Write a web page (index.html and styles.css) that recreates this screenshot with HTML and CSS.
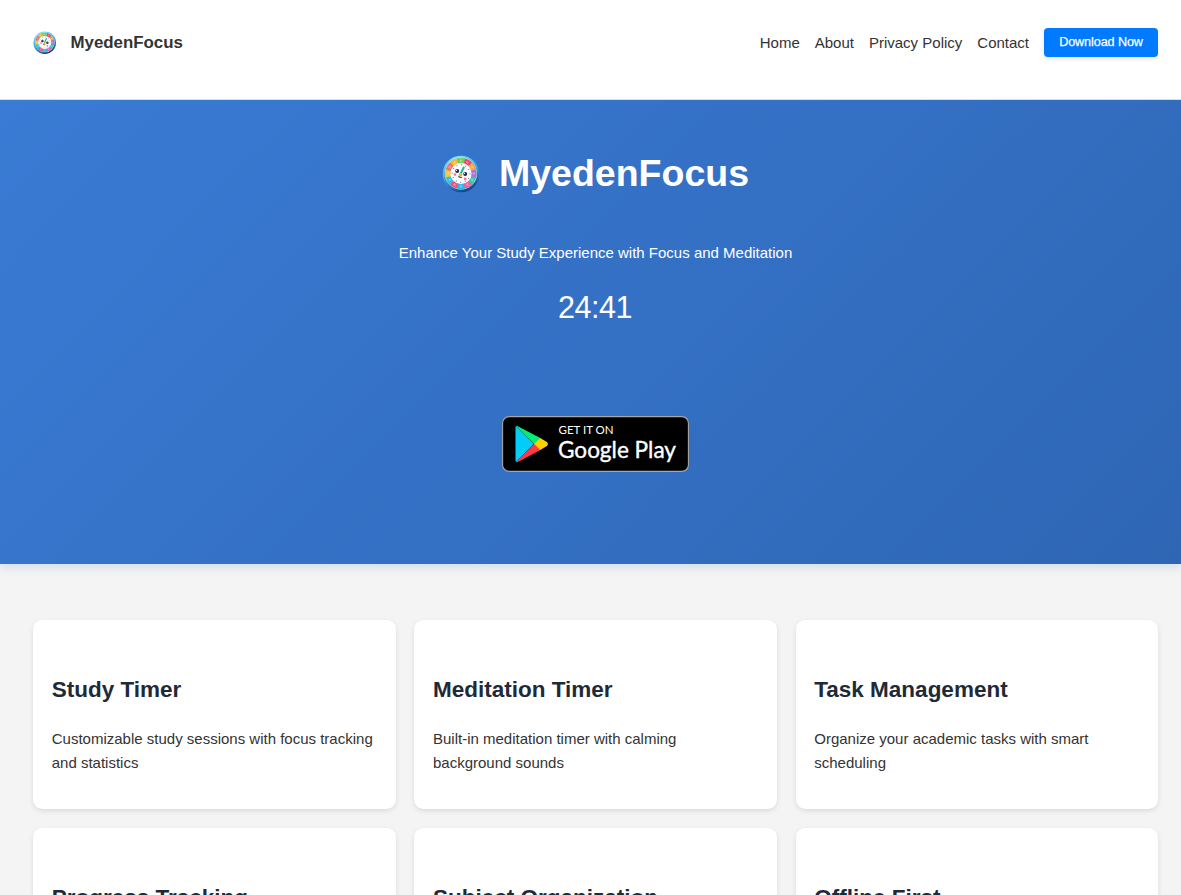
FILE: index.html
```html
<!DOCTYPE html>
<html lang="en">
<head>
<meta charset="utf-8">
<title>MyedenFocus</title>
<link rel="stylesheet" href="styles.css">
</head>
<body>
<svg width="0" height="0" class="defs" aria-hidden="true">
  <defs>
    <linearGradient id="rim" x1="0.2" y1="0" x2="0.6" y2="1"><stop offset="0" stop-color="#8fe6fa"/><stop offset=".5" stop-color="#3aa5df"/><stop offset="1" stop-color="#123f91"/></linearGradient>
    <symbol id="clock" viewBox="0 0 38 38">
      <circle cx="19" cy="19" r="18.3" fill="url(#rim)"/>
      <circle cx="19" cy="18.5" r="16" fill="#d9f5fb"/>
      <g fill="none" stroke-width="5.5">
        <circle cx="19" cy="18.5" r="12.8" stroke="#35c6ae"/>
        <circle cx="19" cy="18.5" r="12.8" stroke="#f04868" pathLength="12" stroke-dasharray="1 11" stroke-dashoffset="2.5"/>
        <circle cx="19" cy="18.5" r="12.8" stroke="#ffa43a" pathLength="12" stroke-dasharray="1 11" stroke-dashoffset="1.5"/>
        <circle cx="19" cy="18.5" r="12.8" stroke="#b36be0" pathLength="12" stroke-dasharray="1 11" stroke-dashoffset=".5"/>
        <circle cx="19" cy="18.5" r="12.8" stroke="#f65c9a" pathLength="12" stroke-dasharray="1 11" stroke-dashoffset="-1.5"/>
        <circle cx="19" cy="18.5" r="12.8" stroke="#2fb8ee" pathLength="12" stroke-dasharray="1 11" stroke-dashoffset="-2.5"/>
        <circle cx="19" cy="18.5" r="12.8" stroke="#f34e86" pathLength="12" stroke-dasharray="1 11" stroke-dashoffset="-3.5"/>
        <circle cx="19" cy="18.5" r="12.8" stroke="#35baf3" pathLength="12" stroke-dasharray="1 11" stroke-dashoffset="-4.5"/>
        <circle cx="19" cy="18.5" r="12.8" stroke="#ffc22e" pathLength="12" stroke-dasharray="1 11" stroke-dashoffset="-5.5"/>
        <circle cx="19" cy="18.5" r="12.8" stroke="#f86b74" pathLength="12" stroke-dasharray="1 11" stroke-dashoffset="-6.5"/>
        <circle cx="19" cy="18.5" r="12.8" stroke="#ffb52d" pathLength="12" stroke-dasharray="1 11" stroke-dashoffset="-7.5"/>
        <circle cx="19" cy="18.5" r="12.8" stroke="#78cf55" pathLength="12" stroke-dasharray="1 11" stroke-dashoffset="-8.5"/>
      </g>
      <circle cx="19" cy="18.5" r="12.8" fill="none" stroke="#fff" stroke-opacity=".3" stroke-width="2.2" pathLength="12" stroke-dasharray=".35 .65" stroke-dashoffset=".18"/>
      <circle cx="19" cy="18.5" r="10.6" fill="#fafdff"/>
      <circle cx="19" cy="18.5" r="8.9" fill="none" stroke="#5c6a86" stroke-width="1.2" pathLength="12" stroke-dasharray=".16 .84"/>
      <circle cx="15.2" cy="16" r="2" fill="#20294a"/><circle cx="23.2" cy="19" r="2" fill="#20294a"/>
      <circle cx="14.6" cy="15.4" r=".6" fill="#fff"/><circle cx="22.6" cy="18.4" r=".6" fill="#fff"/>
      <circle cx="13" cy="19.6" r="1.4" fill="#ff7590"/><circle cx="23.2" cy="24" r="1.4" fill="#ff7590"/>
      <path d="M15.8 20.4q1 3.4 4.8 2.2z" fill="#293c5d"/>
      <path d="M18.8 18.6L21.6 12.6" stroke="#20bd94" stroke-width="2.2" stroke-linecap="round"/>
      <circle cx="18.5" cy="19.9" r="1.8" fill="#ffb52b"/>
    </symbol>
  </defs>
</svg>
<header class="header">
  <a class="brand"><svg class="brand-icon"><use href="#clock"/></svg><span>MyedenFocus</span></a>
  <nav class="nav">
    <a>Home</a><a>About</a><a>Privacy Policy</a><a>Contact</a>
    <a class="download">Download Now</a>
  </nav>
</header>
<section class="hero">
  <h1 class="hero-title"><svg class="hero-icon"><use href="#clock"/></svg><span>MyedenFocus</span></h1>
  <p class="tagline">Enhance Your Study Experience with Focus and Meditation</p>
  <div class="timer">24:41</div>
  <svg class="badge" viewBox="0 0 187 56" role="img" aria-label="Get it on Google Play">
    <rect x=".6" y=".6" width="185.8" height="54.8" rx="6.5" fill="#000" stroke="#a6a6a6" stroke-width="1.1"/>
    <path d="M13.5 11.3v33.5q0 .9.5 1.2L31.7 28 14 10q-.5.4-.5 1.3z" fill="#00cdf8"/>
    <path d="M14 10q.7-.4 1.8.2L38.8 22.2 32.5 28.5z" fill="#00ed76"/>
    <path d="M14 46.1q.7.4 1.8-.2L38.8 33.8 32.5 27.5z" fill="#ff3a44"/>
    <path d="M38.2 22l6.7 3.9q2 2 0 4.1l-6.7 4-6-6z" fill="#ffd000"/>
    <text class="badge-small" x="56.5" y="18.2" textLength="55" lengthAdjust="spacingAndGlyphs">GET IT ON</text>
    <text class="badge-large" x="56" y="41.6" textLength="118" lengthAdjust="spacingAndGlyphs">Google Play</text>
  </svg>
</section>
<main class="features">
  <article class="card"><h3>Study Timer</h3><p>Customizable study sessions with focus tracking and statistics</p></article>
  <article class="card"><h3>Meditation Timer</h3><p>Built-in meditation timer with calming background sounds</p></article>
  <article class="card"><h3>Task Management</h3><p>Organize your academic tasks with smart scheduling</p></article>
  <article class="card"><h3>Progress Tracking</h3></article>
  <article class="card"><h3>Subject Organization</h3></article>
  <article class="card"><h3>Offline First</h3></article>
</main>
</body>
</html>
```
FILE: styles.css
```css
* { box-sizing: border-box; }
body {
  margin: 0;
  height: 895px;
  overflow: hidden;
  background: #f4f4f4;
  color: #333;
  font: 15px/24px "Liberation Sans", Arial, sans-serif;
}
.defs { position: absolute; }
.header {
  height: 100px;
  padding: 28px 23px 0 33px;
  display: flex;
  justify-content: space-between;
  align-items: flex-start;
  background: #fff;
  border-bottom: 1px solid #dfe3e8;
}
.brand {
  display: flex;
  align-items: center;
  height: 29px;
  gap: 14px;
  font-size: 16.875px;
  font-weight: bold;
}
.brand-icon { width: 23.5px; height: 23.5px; }
.nav { display: flex; align-items: center; gap: 15px; height: 29px; }
.download {
  width: 114px;
  height: 29px;
  line-height: 29px;
  border-radius: 4px;
  background: #007bff;
  box-shadow: 0 2px 4px rgba(0, 0, 0, .1);
  color: #fff;
  text-align: center;
  font-size: 12.6px;
  letter-spacing: -.08px;
  -webkit-text-stroke: .25px #fff;
}
.hero {
  position: relative;
  height: 464px;
  padding: 43px 0 0 10px;
  display: flex;
  flex-direction: column;
  align-items: center;
  background: linear-gradient(135deg, #3a7bd5, #2e66b4);
  box-shadow: 0 4px 8px rgba(44, 100, 177, .15);
  color: #fff;
}
.hero-title {
  margin: 0;
  height: 60px;
  display: flex;
  align-items: center;
  gap: 19px;
  font-size: 37.5px;
  line-height: 60px;
}
.hero-icon { width: 38px; height: 38px; margin-top: 2px; }
.tagline { margin: 38px 0 0; }
.timer { margin: 18px 1px 0 0; font-size: 30.5px; line-height: 48px; letter-spacing: -.5px; }
.badge { width: 187px; height: 56px; margin-top: 85px; }
.badge-small { font: 400 12px Lato, sans-serif; fill: #fff; }
.badge-large { font: 400 24px Lato, sans-serif; fill: #fff; stroke: #fff; stroke-width: .4px; }
.features {
  padding: 56px 23px 0 33px;
  display: grid;
  grid-template-columns: repeat(3, 1fr);
  grid-auto-rows: 189px;
  gap: 19px 18.75px;
}
.card {
  padding: 51px 18.75px 0;
  background: #fff;
  border-radius: 9.4px;
  box-shadow: 0 2px 5px rgba(0, 0, 0, .1);
}
.card h3 { margin: 0; color: #1f2937; font-size: 22.5px; line-height: 37px; }
.card p { margin: 19px 0 0; }
```
